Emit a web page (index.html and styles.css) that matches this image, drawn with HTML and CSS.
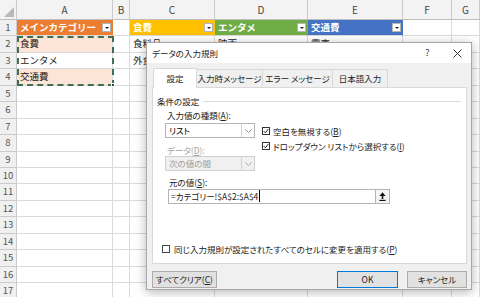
FILE: index.html
```html
<!DOCTYPE html>
<html lang="ja">
<head>
  <meta charset="UTF-8">
  <meta name="viewport" content="width=device-width,initial-scale=1.0">
  <title>データの入力規則</title>
  <link rel="stylesheet" href="styles.css">
</head>
<body>
  <!-- シート -->
  <div class="sheet">
    <div class="row head">
      <div class="corner"></div><div>A</div><div>B</div><div>C</div><div>D</div><div>E</div><div>F</div><div>G</div>
    </div>
    <div class="row">
      <div class="rn">1</div>
      <div class="hd orange">メインカテゴリー<span class="fb"></span></div>
      <div></div>
      <div class="hd gold">食費<span class="fb"></span></div>
      <div class="hd green">エンタメ<span class="fb"></span></div>
      <div class="hd blue">交通費<span class="fb"></span></div>
      <div></div><div></div>
    </div>
    <div class="row">
      <div class="rn">2</div><div class="tint">食費</div><div></div><div>食料品</div><div>映画</div><div>電車</div><div></div><div></div>
    </div>
    <div class="row">
      <div class="rn">3</div><div>エンタメ</div><div></div><div>外食</div><div>音楽</div><div>バス</div><div></div><div></div>
    </div>
    <div class="row">
      <div class="rn">4</div><div class="tint">交通費</div><div></div><div></div><div></div><div></div><div></div><div></div>
    </div>
    <div class="row"><div class="rn">5</div><div></div><div></div><div></div><div></div><div></div><div></div><div></div></div>
    <div class="row"><div class="rn">6</div><div></div><div></div><div></div><div></div><div></div><div></div><div></div></div>
    <div class="row"><div class="rn">7</div><div></div><div></div><div></div><div></div><div></div><div></div><div></div></div>
    <div class="row"><div class="rn">8</div><div></div><div></div><div></div><div></div><div></div><div></div><div></div></div>
    <div class="row"><div class="rn">9</div><div></div><div></div><div></div><div></div><div></div><div></div><div></div></div>
    <div class="row"><div class="rn">10</div><div></div><div></div><div></div><div></div><div></div><div></div><div></div></div>
    <div class="row"><div class="rn">11</div><div></div><div></div><div></div><div></div><div></div><div></div><div></div></div>
    <div class="row"><div class="rn">12</div><div></div><div></div><div></div><div></div><div></div><div></div><div></div></div>
    <div class="row"><div class="rn">13</div><div></div><div></div><div></div><div></div><div></div><div></div><div></div></div>
    <div class="row"><div class="rn">14</div><div></div><div></div><div></div><div></div><div></div><div></div><div></div></div>
    <div class="row"><div class="rn">15</div><div></div><div></div><div></div><div></div><div></div><div></div><div></div></div>
    <div class="row"><div class="rn">16</div><div></div><div></div><div></div><div></div><div></div><div></div><div></div></div>
    <div class="row"><div class="rn">17</div><div></div><div></div><div></div><div></div><div></div><div></div><div></div></div>

    <!-- コピー範囲 A2:A4 -->
    <div class="copy"><span class="handle"></span></div>
  </div>

  <!-- データの入力規則ダイアログ -->
  <div class="dlg">
    <div class="dlg-title">
      <span>データの入力規則</span>
      <span class="tb q">?</span>
      <span class="tb x">
        <svg width="9" height="9" viewBox="0 0 9 9"><path d="M0.5 0.5L8.5 8.5M8.5 0.5L0.5 8.5" stroke="#333" stroke-width="1"/></svg>
      </span>
    </div>
    <div class="dlg-body">
      <div class="tabs">
        <div class="tab active">設定</div>
        <div class="tab">入力時メッセージ</div>
        <div class="tab">エラー メッセージ</div>
        <div class="tab">日本語入力</div>
      </div>
      <div class="panel">
        <div class="group"><span>条件の設定</span></div>
        <div class="cond">
          <div class="left">
            <div class="lbl">入力値の種類(<u>A</u>):</div>
            <div class="sel">
              <span class="sel-val">リスト</span>
              <span class="sel-arr"><svg width="7" height="4" viewBox="0 0 7 4"><path d="M0.5 0.5L3.5 3.5L6.5 0.5" fill="none" stroke="#8a8a8a"/></svg></span>
            </div>
            <div class="lbl dis second">データ(<u>D</u>):</div>
            <div class="sel dis">
              <span class="sel-val">次の値の間</span>
              <span class="sel-arr"><svg width="7" height="4" viewBox="0 0 7 4"><path d="M0.5 0.5L3.5 3.5L6.5 0.5" fill="none" stroke="#a8a8a8"/></svg></span>
            </div>
          </div>
          <div class="right">
            <div class="chk first"><span class="box"><svg width="6" height="6" viewBox="0 0 6 6"><path d="M0.7 3.1L2.4 4.8L5.3 1.1" fill="none" stroke="#222" stroke-width="1"/></svg></span>空白を無視する(<u>B</u>)</div>
            <div class="chk"><span class="box"><svg width="6" height="6" viewBox="0 0 6 6"><path d="M0.7 3.1L2.4 4.8L5.3 1.1" fill="none" stroke="#222" stroke-width="1"/></svg></span>ドロップダウン リストから選択する(<u>I</u>)</div>
          </div>
        </div>
        <div class="lbl src-lbl">元の値(<u>S</u>):</div>
        <div class="src">
          <span class="src-val"><span class="caret">=カテゴリー!$A$2:$A$4</span></span>
          <span class="pick"><svg width="7" height="9" viewBox="0 0 7 9"><path d="M3.5 0.3L6.6 4H4.3V7H2.7V4H0.4Z" fill="#111"/><rect x="0.4" y="7.8" width="6.2" height="1.2" fill="#111"/></svg></span>
        </div>
        <div class="chk apply"><span class="box"></span>同じ入力規則が設定されたすべてのセルに変更を適用する(<u>P</u>)</div>
      </div>
      <div class="btns">
        <div class="btn clear">すべてクリア(<u>C</u>)</div>
        <div class="btn ok">OK</div>
        <div class="btn cancel">キャンセル</div>
      </div>
    </div>
  </div>
</body>
</html>
```

FILE: styles.css
```css
/* ——— 全体 ——— */
* { box-sizing:border-box; }
body {
  margin:0; width:480px; height:297px; overflow:hidden;
  position:relative; background:#fff; color:#000;
  font-family:"Noto Sans CJK JP","Noto Sans",sans-serif;
}

/* ——— シート ——— */
.sheet { position:relative; }
.row {
  display:grid; height:16.45px;
  grid-template-columns:17px 96px 17px 85px 93px 95px 49px 28px;
}
.row > div {
  border-right:1px solid #dadada; border-bottom:1px solid #dadada;
  font-size:9.5px; line-height:15px; padding-left:3px;
  white-space:nowrap; overflow:hidden; color:#222;
}
.row.head { height:20px; }
.row.head > div {
  background:#f3f3f3; border-color:#cbcbcb; border-bottom-color:#bdbdbd;
  text-align:center; padding:0; line-height:19px;
  font-size:10px; color:#444;
}
.row.head .corner {
  display:flex; justify-content:flex-end; align-items:flex-end;
  padding:0 2px 2px 0;
}
.corner::after {
  content:""; width:10px; height:10px; background:#b9b9b9;
  clip-path:polygon(100% 0,100% 100%,0 100%);
}
.row > .rn {
  background:#f0f0f0; border-color:#cbcbcb;
  text-align:center; padding:0; color:#555; font-size:9.5px;
}
.tint { background:#fce4d6; }
.row > .hd {
  display:flex; justify-content:space-between; align-items:center;
  color:#fff; font-weight:bold; padding-right:1px; border-right-color:transparent;
}
.orange { background:#ed7d31; }
.gold   { background:#ffc000; }
.green  { background:#70ad47; }
.blue   { background:#4472c4; }
.fb {
  width:9px; height:9px; background:#fff; border:1px solid #b5b5b5;
  display:flex; justify-content:center; align-items:center;
}
.fb::after {
  content:""; border-left:2px solid transparent; border-right:2px solid transparent;
  border-top:2px solid #222;
}

/* コピー範囲の点線 */
.copy {
  position:absolute; left:17px; top:36px; width:97px; height:50px;
  border:2px dashed #3f6e50;
}
.handle {
  position:absolute; right:-3px; bottom:-3px; width:4px; height:4px;
  background:#1e4a2e; border:1px solid #fff;
}

/* ——— ダイアログ ——— */
.dlg {
  position:absolute; left:146px; top:42px; width:326px; height:248px;
  background:#f0f0f0; border:1px solid #a7a7a7;
  box-shadow:0 2px 10px rgba(0,0,0,0.3);
  font-size:8.5px; line-height:10px; font-feature-settings:"palt";
  display:flex; flex-direction:column;
}
.dlg-title {
  height:20px; background:#fff; display:flex; align-items:center;
  padding-left:5px; color:#222;
}
.tb { display:flex; justify-content:center; align-items:center; height:20px; }
.tb.q { margin-left:auto; width:31px; font-size:9px; color:#333; }
.tb.x { width:28px; }
.dlg-body { flex:1; padding:0 4px 0 5px; }

.tabs { display:flex; align-items:flex-end; height:24px; padding-left:1px; }
.tab {
  height:18px; line-height:17px; text-align:center;
  border:1px solid #d9d9d9; border-bottom:none; margin-right:-1px;
  background:#f0f0f0; color:#222;
}
.tab:nth-child(1) { width:44px; }
.tab:nth-child(2) { width:67px; }
.tab:nth-child(3) { width:71px; }
.tab:nth-child(4) { width:56px; }
.tab.active {
  height:20px; line-height:19px; background:#fff;
  position:relative; z-index:1; margin-bottom:-1px;
}
.panel {
  height:177px; background:#fff; border:1px solid #d9d9d9;
}
.group {
  display:flex; align-items:center; margin-top:8px; padding:0 5px 0 4px;
  color:#222;
}
.group::after {
  content:""; flex:1; border-top:1px solid #dcdcdc; margin-left:4px;
}
.cond { display:flex; margin:4px 0 0 12px; }
.left { width:90px; }
.lbl { height:10px; padding-left:2px; color:#222; }
.lbl.second { margin-top:7px; }
.lbl.dis { color:#a3a3a3; }
.sel {
  display:flex; height:15px; margin-top:3px;
  border:1px solid #b4b4b4; background:#fff;
}
.sel.dis { margin-top:1px; background:#f0f0f0; border-color:#cfcfcf; color:#9d9d9d; }
.sel-val { flex:1; padding-left:3px; line-height:13px; }
.sel-arr {
  width:13px; border-left:1px solid #d4d4d4;
  display:flex; justify-content:center; align-items:center;
}
.right { margin-left:7px; }
.chk { display:flex; align-items:center; height:10px; margin-top:5px; color:#222; }
.chk.first { margin-top:16px; }
.box {
  width:8px; height:8px; border:1px solid #333; background:#fff;
  margin-right:3px; display:flex; justify-content:center; align-items:center;
}
.src-lbl { margin:6px 0 0 14px; }
.src { display:flex; width:222px; height:15px; margin:2px 0 0 15px; }
.src-val {
  flex:1; border:1px solid #b4b4b4; border-right:none;
  padding-left:2px; line-height:13px; color:#222;
}
.caret { border-right:1px solid #000; padding-right:1px; }
.pick {
  width:15px; border:1px solid #b4b4b4; background:#f4f4f4;
  display:flex; justify-content:center; align-items:center;
}
.chk.apply { margin:40px 0 0 9px; }
.chk.apply .box { border-color:#444; margin-right:4px; }

.btns { display:flex; margin-top:7px; }
.btn {
  height:17px; line-height:15px; text-align:center;
  border:1px solid #adadad; background:#e1e1e1; color:#222;
}
.btn.clear { width:65px; }
.btn.ok { width:61px; margin-left:auto; border-color:#0078d7; }
.btn.cancel { width:60px; margin-left:9px; }
```
